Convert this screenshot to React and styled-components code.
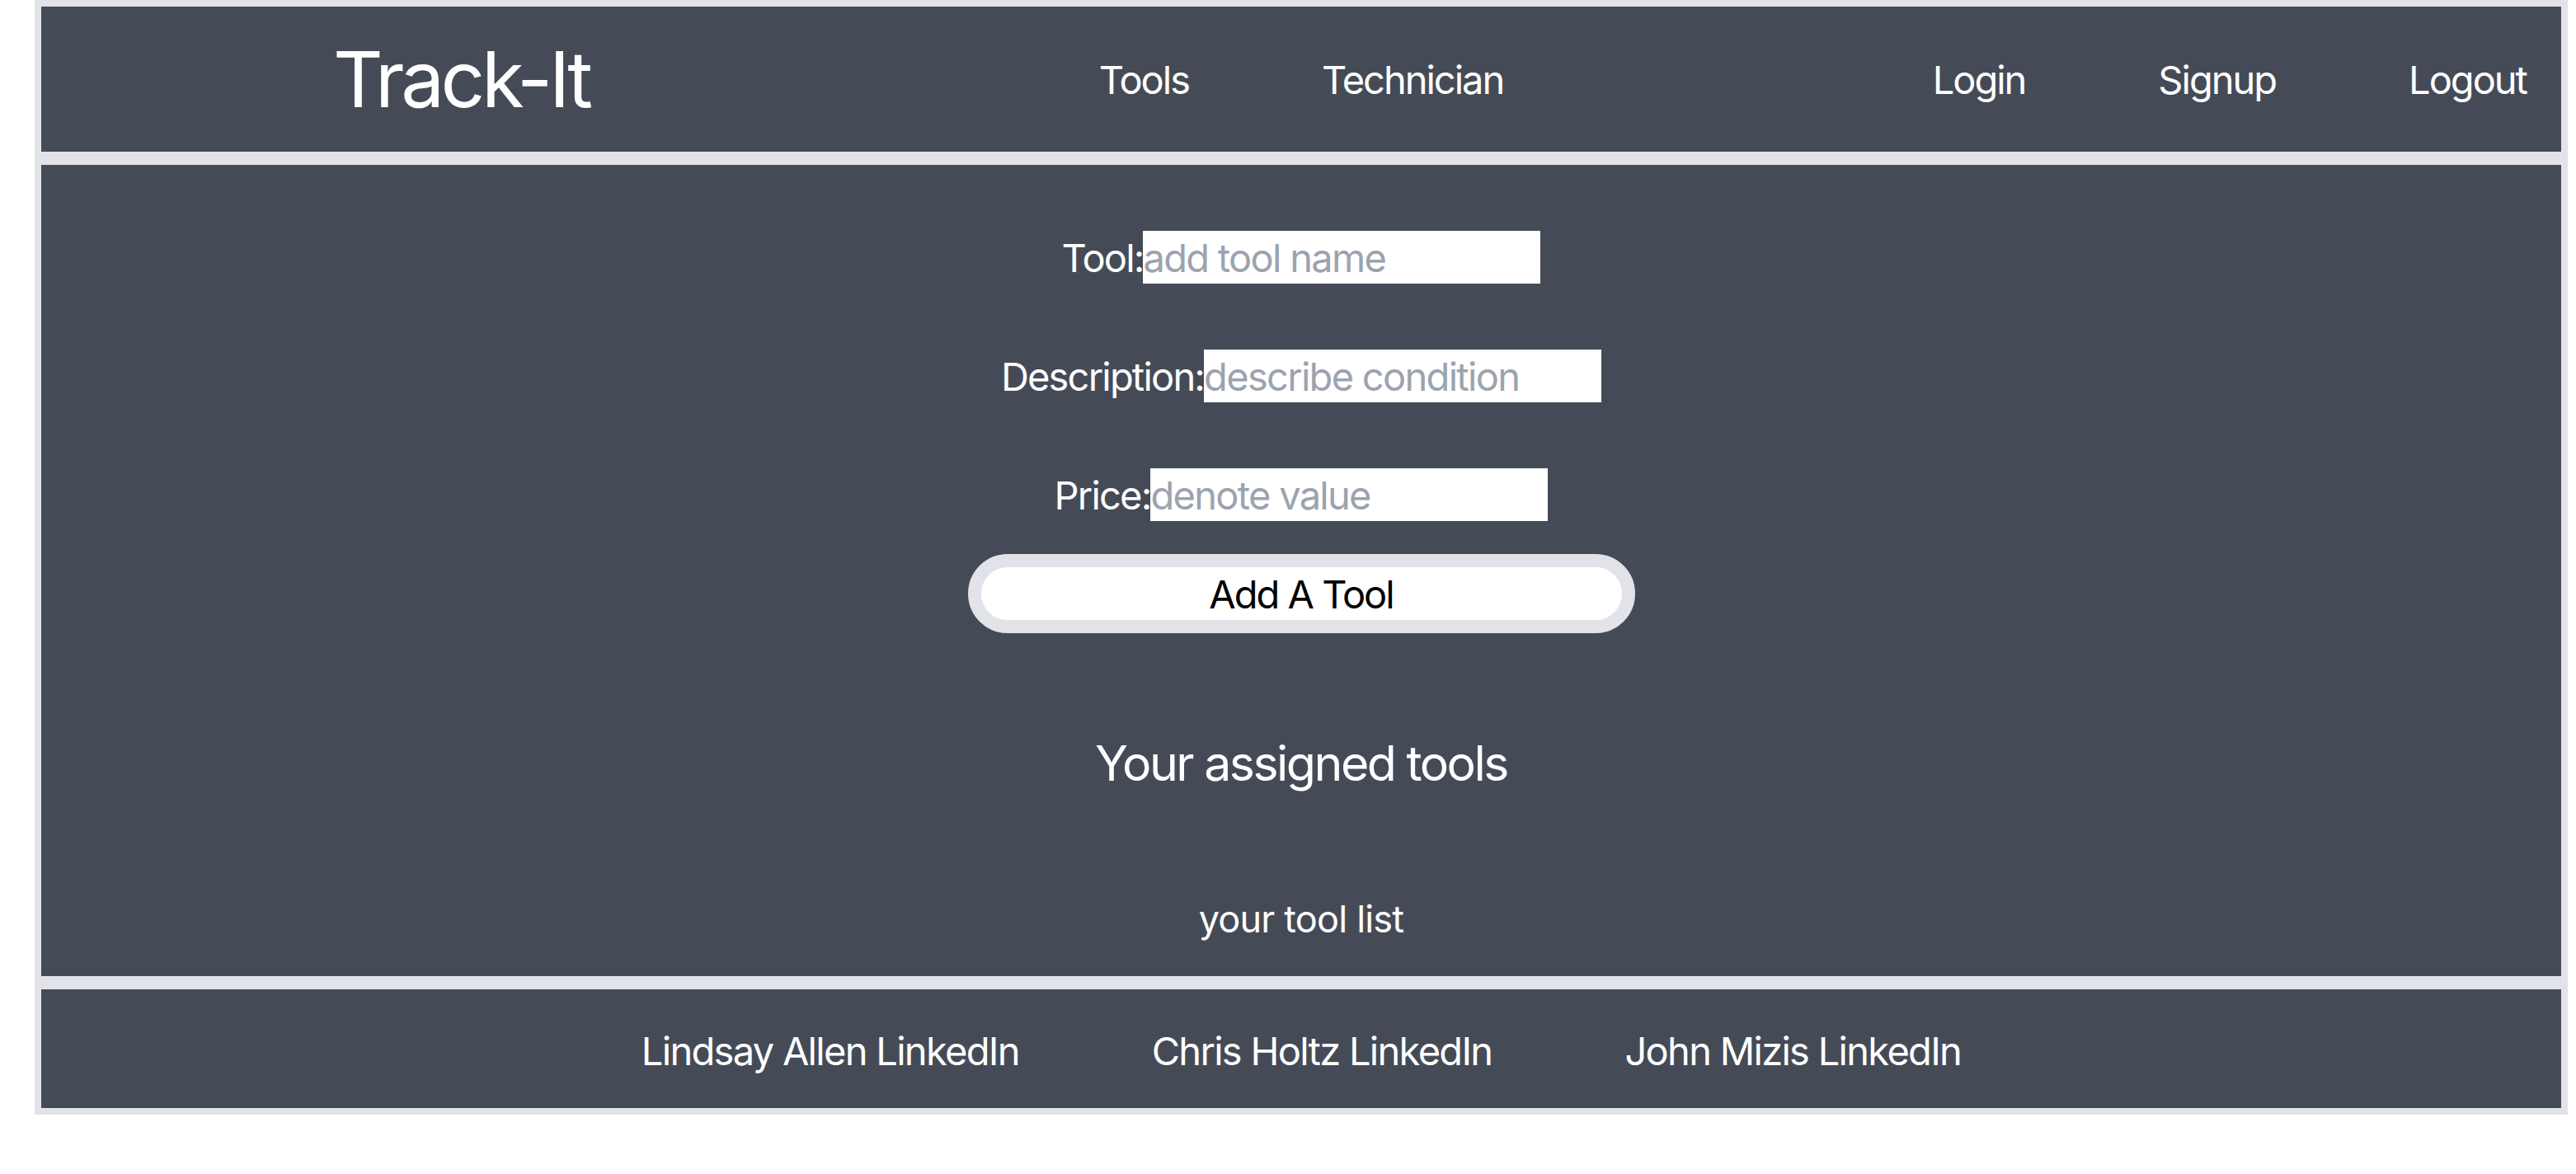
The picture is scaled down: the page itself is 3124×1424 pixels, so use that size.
import React from "react";
import styled, { createGlobalStyle } from "styled-components";

const dark = "#454b56";
const light = "#e1e3e8";

const GlobalStyle = createGlobalStyle`
  body {
    margin: 0;
    background: #ffffff;
    font-family: Inter, "Noto Sans", sans-serif;
  }
`;

const Page = styled.div`
  margin-left: 42px;
  width: 3072px;
  box-sizing: border-box;
  padding: 8px;
  background: ${light};
  display: flex;
  flex-direction: column;
  gap: 16px;
`;

const Header = styled.header`
  background: ${dark};
  height: 176px;
  display: grid;
  grid-template-columns: 1fr auto 1fr;
  align-items: center;
  color: white;
`;

const Logo = styled.h1`
  margin: 0;
  padding-left: 354px;
  font-size: 94px;
  font-weight: 400;
  line-height: 1;
  letter-spacing: -4.3px;
`;

const NavGroup = styled.nav`
  display: flex;
  gap: 161px;
  justify-self: ${(p) => (p.$end ? "end" : "center")};
  padding-right: ${(p) => (p.$end ? "42px" : "0")};
`;

const NavLink = styled.a`
  color: white;
  text-decoration: none;
  font-size: 47px;
  line-height: 1;
  letter-spacing: -2px;
`;

const Main = styled.main`
  background: ${dark};
  display: flex;
  flex-direction: column;
  align-items: center;
  padding: 80px 0 40px;
  color: white;
`;

const Form = styled.form`
  display: flex;
  flex-direction: column;
  align-items: center;
  gap: 80px;
`;

const Row = styled.label`
  display: flex;
  align-items: center;
  font-size: 47px;
  letter-spacing: -1.8px;
`;

const Input = styled.input`
  width: 482px;
  height: 64px;
  box-sizing: border-box;
  border: none;
  padding: 0;
  margin: 0;
  background: white;
  font-family: inherit;
  font-size: 47px;
  letter-spacing: -1.7px;
  color: #111827;
  outline: none;
  &::placeholder {
    color: #9ca3af;
  }
`;

const Button = styled.button`
  margin-top: -40px;
  width: 809px;
  height: 96px;
  box-sizing: border-box;
  border: 16px solid ${light};
  border-radius: 9999px;
  background: white;
  color: black;
  font-family: inherit;
  font-size: 47px;
  letter-spacing: -2px;
  padding: 0;
`;

const Heading = styled.h2`
  margin: 122px 0 0;
  font-size: 59px;
  font-weight: 400;
  line-height: 72px;
  letter-spacing: -2.5px;
`;

const ToolList = styled.p`
  margin: 124px 0 0;
  font-size: 45px;
  line-height: 58px;
  letter-spacing: -0.8px;
`;

const Footer = styled.footer`
  background: ${dark};
  height: 144px;
  box-sizing: border-box;
  padding-top: 4px;
  display: flex;
  justify-content: center;
  align-items: center;
  gap: 161px;
`;

const FooterLink = styled.a`
  color: white;
  text-decoration: none;
  font-size: 47px;
  line-height: 1;
  letter-spacing: -1.7px;
`;

export default function App() {
  return (
    <>
      <GlobalStyle />
      <Page>
        <Header>
          <Logo>Track-It</Logo>
          <NavGroup>
            <NavLink href="#">Tools</NavLink>
            <NavLink href="#">Technician</NavLink>
          </NavGroup>
          <NavGroup $end>
            <NavLink href="#">Login</NavLink>
            <NavLink href="#">Signup</NavLink>
            <NavLink href="#">Logout</NavLink>
          </NavGroup>
        </Header>
        <Main>
          <Form onSubmit={(e) => e.preventDefault()}>
            <Row>
              Tool:
              <Input placeholder="add tool name" />
            </Row>
            <Row>
              Description:
              <Input placeholder="describe condition" />
            </Row>
            <Row>
              Price:
              <Input placeholder="denote value" />
            </Row>
            <Button type="submit">Add A Tool</Button>
          </Form>
          <Heading>Your assigned tools</Heading>
          <ToolList>your tool list</ToolList>
        </Main>
        <Footer>
          <FooterLink href="#">Lindsay Allen LinkedIn</FooterLink>
          <FooterLink href="#">Chris Holtz LinkedIn</FooterLink>
          <FooterLink href="#">John Mizis LinkedIn</FooterLink>
        </Footer>
      </Page>
    </>
  );
}
